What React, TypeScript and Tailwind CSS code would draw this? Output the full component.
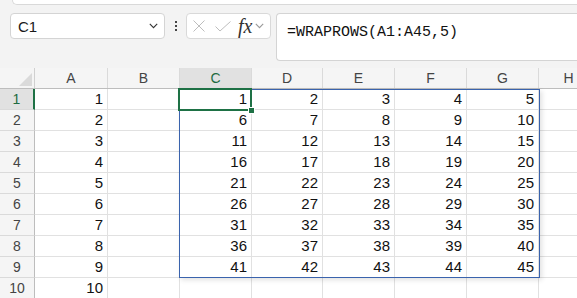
import React from 'react';

const cols = [
    { label: 'A', w: 'w-[73px]' },
    { label: 'B', w: 'w-[72px]' },
    { label: 'C', w: 'w-[72px]' },
    { label: 'D', w: 'w-[71px]' },
    { label: 'E', w: 'w-[72px]' },
    { label: 'F', w: 'w-[72px]' },
    { label: 'G', w: 'w-[72px]' },
    { label: 'H', w: 'w-[60px]' },
];

const cellValue = (row: number, col: number): string => {
    if (col === 0) return String(row);
    if (col >= 2 && col <= 6 && row <= 9) return String((row - 1) * 5 + (col - 1));
    return '';
};

const Chevron = ({ className }: { className?: string }) => (
    <svg className={className} width="9" height="6" viewBox="0 0 9 6" fill="none">
        <path d="M0.8 0.8 L4.5 4.6 L8.2 0.8" stroke="currentColor" strokeWidth="1.1" />
    </svg>
);

const App: React.FC = () => {
    return (
        <div className="w-[577px] h-[298px] overflow-hidden bg-[#f3f3f3] font-['Liberation_Sans',Arial,sans-serif] relative">
            {/* Ribbon edge */}
            <div className="ml-[12px] h-[5px] bg-white rounded-bl-[8px] border-b border-l border-[#d9d9d9]" />

            {/* Formula bar */}
            <div className="flex items-start h-[63px] pt-[8px]">
                <div className="ml-[10px] w-[155px] h-[26px] bg-white border border-[#d4d4d4] rounded-[4px] flex items-center pl-[7px] pr-[6px]">
                    <span className="text-[15px] text-[#1a1a1a] flex-1 leading-none">C1</span>
                    <Chevron className="text-[#333]" />
                </div>
                <div className="w-[21px] h-[26px] flex flex-col items-center justify-center gap-[2px]">
                    <div className="w-[2px] h-[2px] bg-[#444]" />
                    <div className="w-[2px] h-[2px] bg-[#444]" />
                    <div className="w-[2px] h-[2px] bg-[#444]" />
                </div>
                <div className="w-[85px] h-[26px] bg-white border border-[#d9d9d9] rounded-[4px] flex items-center pl-[6px]">
                    <svg width="12" height="12" viewBox="0 0 12 12" className="text-[#bdbdbd]">
                        <path d="M0.5 0.5 L11.5 11.5 M11.5 0.5 L0.5 11.5" stroke="currentColor" strokeWidth="1" />
                    </svg>
                    <svg width="16" height="11" viewBox="0 0 16 11" className="ml-[10px] text-[#bdbdbd]">
                        <path d="M0.5 5.5 L5 10 L15.5 0.5" stroke="currentColor" strokeWidth="1" fill="none" />
                    </svg>
                    <span className="ml-[7px] font-['Liberation_Serif',serif] italic text-[20px] text-[#333] leading-none">fx</span>
                    <Chevron className="ml-[3px] text-[#999]" />
                </div>
                <div className="ml-[5px] flex-1 h-[48px] bg-white border-y border-l border-[#d4d4d4] rounded-l-[4px] pl-[10px] pt-[5px]">
                    <span className="font-['Liberation_Mono',monospace] text-[15px] text-[#111]">=WRAPROWS(A1:A45,5)</span>
                </div>
            </div>

            {/* Grid */}
            <div className="relative">
                <div className="flex h-[21px] bg-[#f5f5f5] border-b border-[#bdbdbd]">
                    <div className="w-[35px] shrink-0 relative border-r border-[#d0d0d0]">
                        <div className="absolute right-[2px] bottom-[2px] w-0 h-0 border-l-[13px] border-l-transparent border-b-[13px] border-b-[#dadada]" />
                    </div>
                    {cols.map((c) => (
                        <div
                            key={c.label}
                            className={`${c.w} shrink-0 flex items-center justify-center text-[14px] border-r border-[#dadada] ${c.label === 'C' ? 'bg-[#e1e1e1] text-[#1e6b41]' : 'text-[#444]'}`}
                        >
                            {c.label}
                        </div>
                    ))}
                </div>
                {Array.from({ length: 10 }, (_, i) => i + 1).map((r) => (
                    <div key={r} className="flex h-[21px]">
                        <div
                            className={`w-[35px] shrink-0 flex items-center justify-center text-[14px] border-b border-[#dadada] ${r === 1 ? 'bg-[#e1e1e1] text-[#1e6b41] border-r-2 border-r-[#1e7145]' : 'bg-[#f5f5f5] text-[#444] border-r border-r-[#bdbdbd]'}`}
                        >
                            {r}
                        </div>
                        {cols.map((c, ci) => (
                            <div
                                key={c.label}
                                className={`${c.w} shrink-0 bg-white border-r border-b border-[#e1e1e1] flex items-center justify-end pr-[4px] text-[15px] text-[#111]`}
                            >
                                {cellValue(r, ci)}
                            </div>
                        ))}
                    </div>
                ))}

                {/* Spill range */}
                <div className="absolute left-[179px] top-[21px] w-[361px] h-[189px] border border-[#3a63ad] shadow-[2px_2px_5px_rgba(0,0,0,0.12)] pointer-events-none" />
                {/* Active cell */}
                <div className="absolute left-[178px] top-[20px] w-[74px] h-[23px] border-2 border-[#1e7145] pointer-events-none" />
                <div className="absolute left-[248px] top-[39px] w-[7px] h-[7px] bg-[#1e7145] border border-white pointer-events-none" />
            </div>
        </div>
    );
};

export default App;
